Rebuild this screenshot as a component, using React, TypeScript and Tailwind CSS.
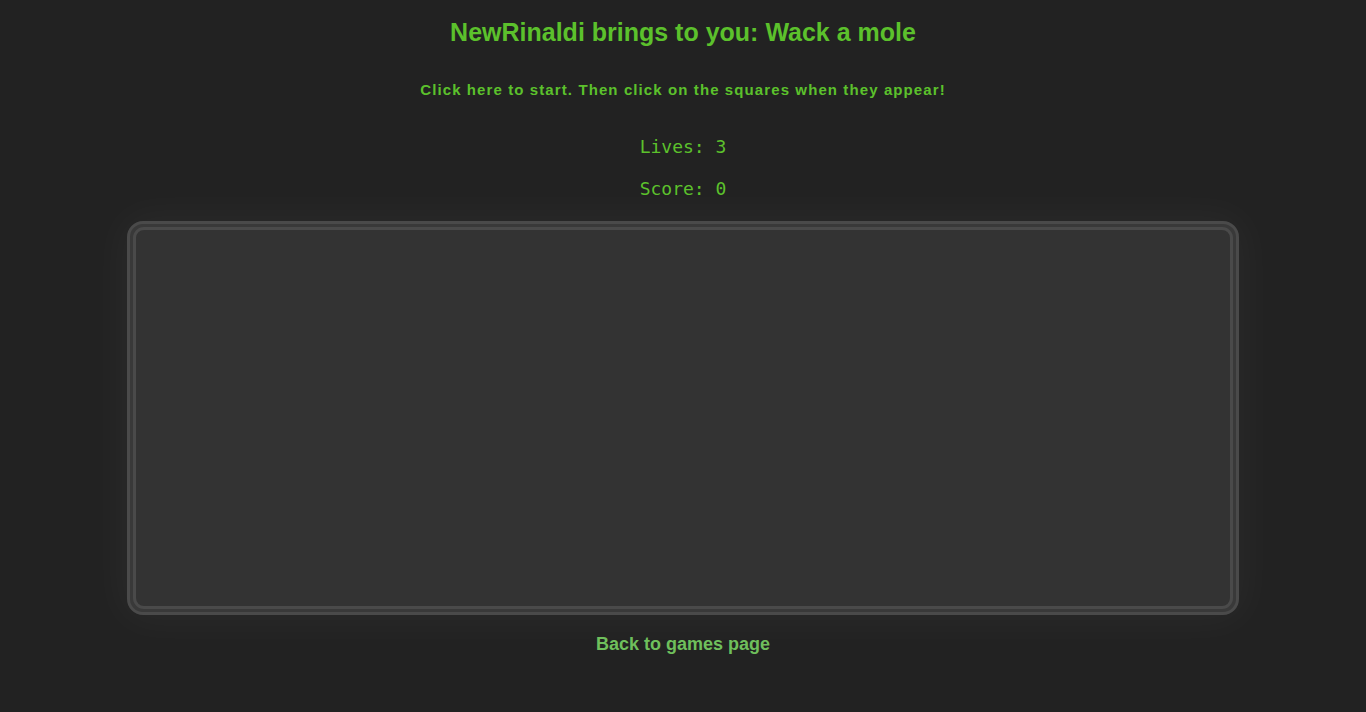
export default function App() {
  return (
    <div className="min-h-screen bg-[#222222] flex flex-col items-center font-['Liberation_Sans',Arial,sans-serif]">
      <h1 className="mt-[17px] text-[25px] leading-[30px] font-bold text-[#5cc12c]">
        NewRinaldi brings to you: Wack a mole
      </h1>
      <p className="mt-[34px] text-[15px] leading-[18px] font-bold tracking-[1.1px] text-[#5cc12c] cursor-pointer">
        Click here to start. Then click on the squares when they appear!
      </p>
      <div className="mt-[37px] text-[18px] leading-[22px] text-[#5cc12c] font-['DejaVu_Sans_Mono',monospace]">
        Lives: 3
      </div>
      <div className="mt-[20px] text-[18px] leading-[22px] text-[#5cc12c] font-['DejaVu_Sans_Mono',monospace]">
        Score: 0
      </div>
      <div className="mt-[21px] w-[1112px] h-[394px] rounded-[16px] border-[3px] border-[#4a4a4a] bg-[#393939] p-[3px] shadow-[0_0_40px_8px_rgba(255,255,255,0.035)]">
        <div className="h-full w-full rounded-[11px] border-[3px] border-[#4a4a4a] bg-[#333333]" />
      </div>
      <a href="#" className="mt-[18px] text-[18px] leading-[22px] font-bold text-[#6fbf5c]">
        Back to games page
      </a>
    </div>
  );
}
